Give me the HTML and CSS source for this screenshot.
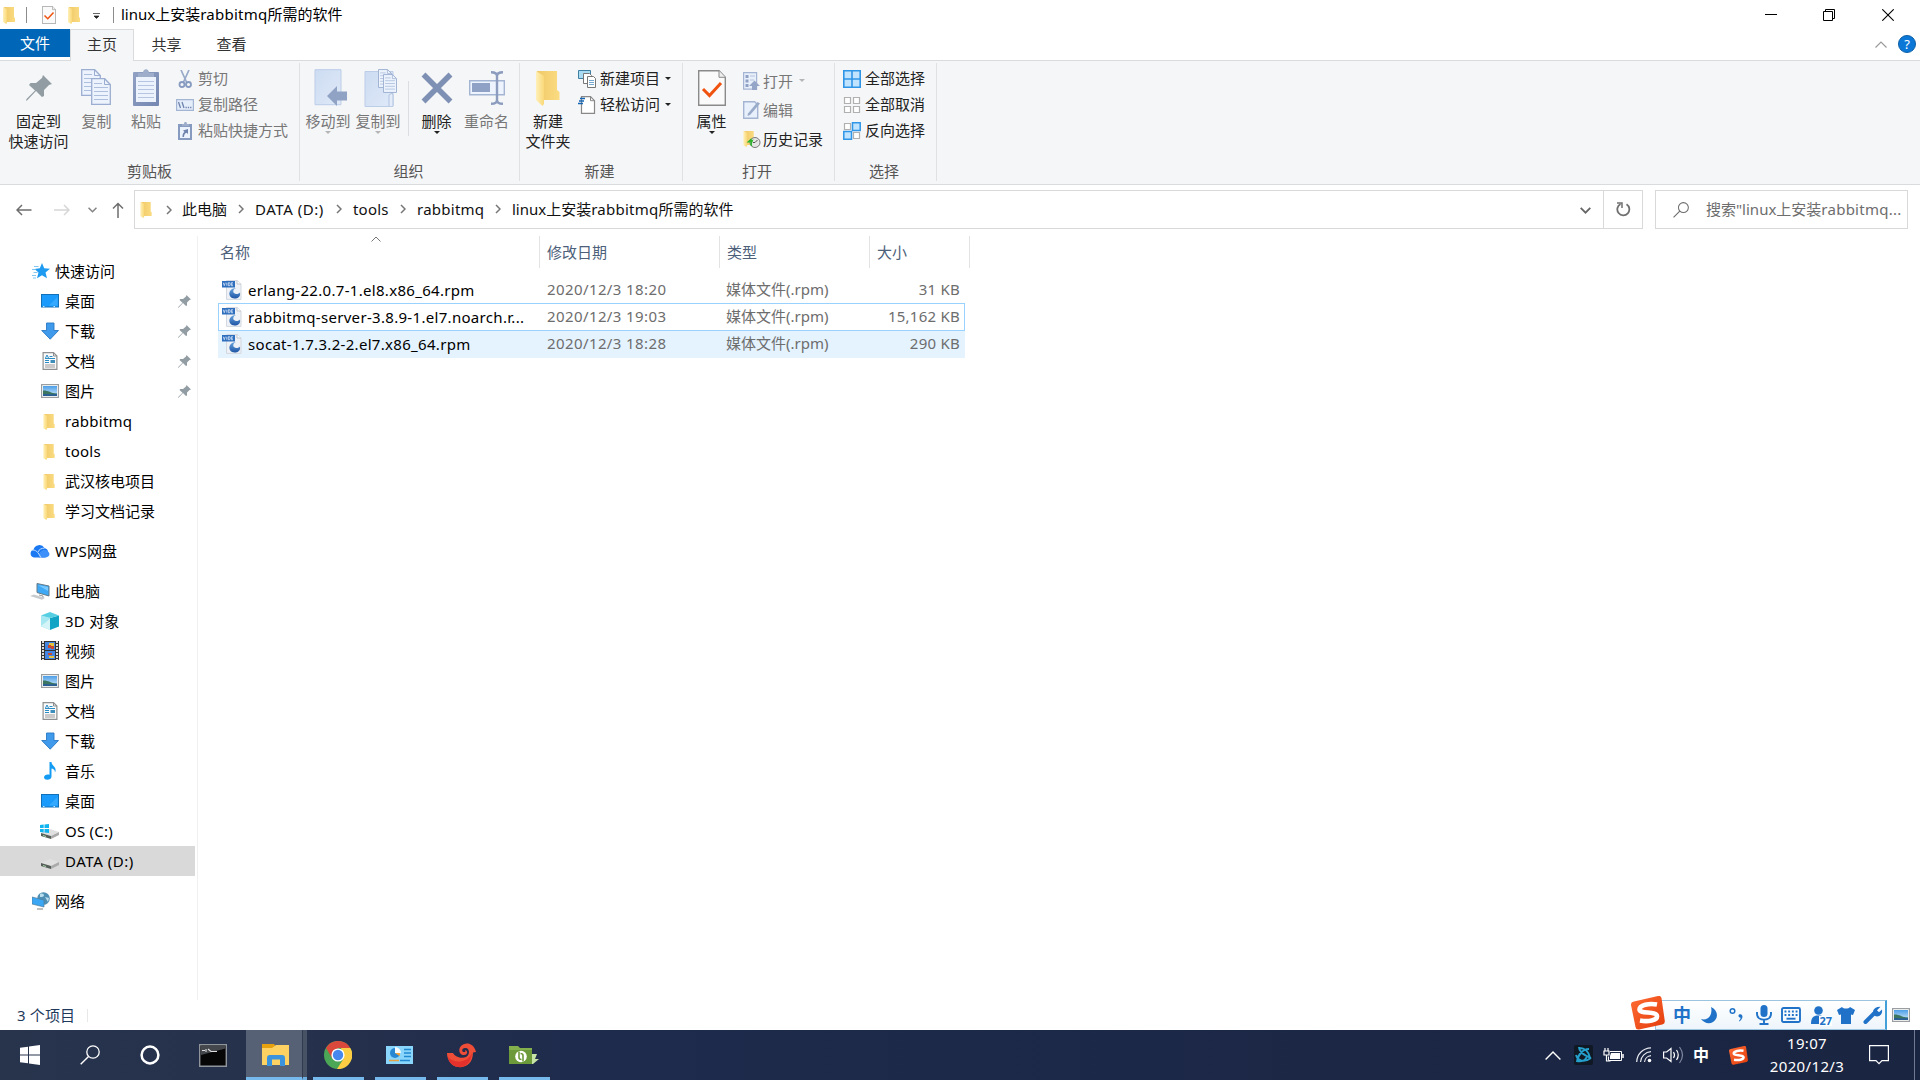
FILE: index.html
```html
<!DOCTYPE html>
<html lang="zh-CN">
<head>
<meta charset="utf-8">
<title>linux上安装rabbitmq所需的软件</title>
<link rel="stylesheet" href="styles.css">
</head>
<body>
<svg class="defs" width="0" height="0">
  <defs>
    <linearGradient id="gFold" x1="0" x2="1"><stop offset="0" stop-color="#f0c968"/><stop offset="1" stop-color="#fbdc82"/></linearGradient>
    <linearGradient id="gFront" x1="0" x2="1"><stop offset="0" stop-color="#fff0b8"/><stop offset="1" stop-color="#f9d878"/></linearGradient>
    <linearGradient id="gPaste" x1="0" x2="1" y2="1"><stop offset="0" stop-color="#91a1c4"/><stop offset="1" stop-color="#7487b1"/></linearGradient>
    <linearGradient id="gPale" x1="0" x2="1" y2="1"><stop offset="0" stop-color="#cddcf2"/><stop offset="1" stop-color="#dfe9f8"/></linearGradient>
    <linearGradient id="gSky" x1="0" x2="0" y2="1"><stop offset="0" stop-color="#4d9fe8"/><stop offset="1" stop-color="#cfe9fa"/></linearGradient>
    <linearGradient id="gRed" x1="0" x2="1" y2="1"><stop offset="0" stop-color="#ff6c34"/><stop offset="1" stop-color="#e33d0c"/></linearGradient>
    <linearGradient id="gOrb" x1="0" x2="0" y2="1"><stop offset="0" stop-color="#6aa5de"/><stop offset="1" stop-color="#1f56a6"/></linearGradient>
  </defs>
  <symbol id="folder" viewBox="0 0 12 18"><path d="M1 1h10v10l1 1v4H3z" fill="url(#gFold)"/><path d="M0 1l4 2v14l-1 1-3-2z" fill="url(#gFront)"/></symbol>
  <symbol id="checkdoc" viewBox="0 0 28 36"><path d="M.7.7H21l6.300 6.600V35.300H.7z" fill="#fafafa" stroke="#8a8a8a" stroke-width="1.400"/><path d="M21 .7v6.600h6.300" fill="#eee" stroke="#8a8a8a"/><path d="M5 19l6.500 6.500L23 13" fill="none" stroke="#f0520f" stroke-width="3"/></symbol>
  <symbol id="pin" viewBox="0 0 26 26"><path d="M17 0l9 9-3 1-5 5v6l-2 1-6-6-8.500 9L0 26l.5-2L9 15.500 3 10l1.500-2h5.500l6-5z" fill="#929da3"/></symbol>
  <symbol id="page" viewBox="0 0 20 27"><path d="M.7.7h13l5.600 5.800v19.800H.7z" fill="#ecf3fd" stroke="#9badd0" stroke-width="1.300"/><path d="M13.500 1v5.500h5.500" fill="none" stroke="#9badd0"/><path d="M3 9.500h14M3 13.500h14M3 17.500h14M3 21.500h14M3 5.500h8" stroke="#aebfdd" stroke-width="1.200"/></symbol>
  <symbol id="down" viewBox="0 0 18 18"><path d="M5.500 1h7.500v7.500h4.500L9.200 17.200.7 8.500h4.800z" fill="#3f9aec" stroke="#2878c5" stroke-width=".9"/></symbol>
  <symbol id="desktop" viewBox="0 0 18 14"><rect x=".5" y=".5" width="17" height="12.500" fill="#1a9bfc" stroke="#1270b8"/><path d="M8 11.500L16.500 3v8.500z" fill="#35a9ff"/><path d="M2 12.500h13" stroke="#bfe5ff" stroke-dasharray="1.500 9"/></symbol>
  <symbol id="doc" viewBox="0 0 15 18"><path d="M.6.600H11l3.400 3.400v13.400H.6z" fill="#fafafa" stroke="#8d8f90" stroke-width="1.200"/><path d="M11 .6V4h3.400" fill="none" stroke="#8d8f90"/><path d="M3 6l1.500-3L6 6M7 4.500h3M2.500 6.500h10M2.500 8.500h4M2.500 10.500h4" fill="none" stroke="#2a8cc4"/><path d="M8 8h4.500v3H8z" fill="#3d8dbb"/><path d="M2.500 13h10M2.500 15h10" stroke="#999"/></symbol>
  <symbol id="picture" viewBox="0 0 18 14"><rect x=".6" y=".6" width="16.800" height="12.800" fill="#fff" stroke="#9b9ea1" stroke-width="1.200"/><rect x="2" y="2" width="14" height="10" fill="url(#gSky)"/><path d="M2 6.500c5-.5 7 2.500 14 3V12H2z" fill="#3c7560"/><path d="M2 10c4-.5 8 1 14-.2V12H2z" fill="#2a5f96"/></symbol>
  <symbol id="star" viewBox="0 0 18 16"><path d="M10 0l2.200 5.300 5.800.4-4.500 3.700L15 15.300l-5-3.100-5 3.100 1.500-5.900L2.500 6l5.300-.700z" fill="#1e9bf0"/><path d="M2 3.500h4.500M0 6.500h4M1.500 9.500h4M0 12.500h4M1 15h3" stroke="#66b8ee" stroke-width=".8"/></symbol>
  <symbol id="cloud" viewBox="0 0 20 14"><path d="M4 13.500a4 4 0 0 1-.5-7.800A6 6 0 0 1 14.500 4a5 5 0 0 1 .5 9.500z" fill="#1a78f2"/><path d="M9 13.500c-1-6 5-9.500 9-6 3 2.500 1 6-3 6z" fill="#3d90fa"/><path d="M1 6.200c5-1 7 2 10 7.500M8 8c1-2.500 3.500-4 6.500-3.800" fill="none" stroke="#d6e9ff" stroke-width=".9"/></symbol>
  <symbol id="pc" viewBox="0 0 20 17"><path d="M7 .5L19 3v10L7 9.500z" fill="#3fa9f5" stroke="#657b88"/><path d="M8 2l10 6V4z" fill="#79c9ff"/><path d="M9 12l4 1v2" stroke="#999" fill="none"/><path d="M0 13l4-1.500L15 15l-3 1.800z" fill="#c8cbce"/></symbol>
  <symbol id="cube" viewBox="0 0 18 18"><path d="M0 3.500l9 2.500V18l-9-3.500z" fill="#a5e8f1"/><path d="M18 3.500L9 6V18l9-3.500z" fill="#12a4c4"/><path d="M9 0l9 3.500L9 6 0 3.500z" fill="#57cfe2"/><path d="M0 14l9-7v11z" fill="#d5f4f7"/></symbol>
  <symbol id="film" viewBox="0 0 18 20"><path d="M0 0h18v19H0z" fill="#333"/><path d="M4 1h10v8H4zM4 10h10v8H4z" fill="#4285e2"/><path d="M8 2h5v3H8zM8 15h5v2H8z" fill="#e6c33c"/><path d="M7 4h3v3H7zM10 5h3v3h-3zM7 12h4v2H7z" fill="#c8492f"/><path d="M2 0v19M16 0v19" stroke="#ddd" stroke-width="2" stroke-dasharray="2 1"/></symbol>
  <symbol id="note" viewBox="0 0 12 18"><path d="M5.500 0h2c0 4 6 5 3.500 10.500 0-3-2-4-3.500-4v8c0 4-7.500 4.500-7.500.8 0-2.500 3.500-3.500 5.500-2.500z" fill="#149bf3"/></symbol>
  <symbol id="drive" viewBox="0 0 18 10"><path d="M0 4l9-4 9 3-8 4z" fill="#e0e0e0"/><path d="M0 4l10 3v3L0 7z" fill="#555e59"/><path d="M10 7l8-4v3l-8 4z" fill="#aaa"/><path d="M2 6.500l3 1" stroke="#a7d9aa"/></symbol>
  <symbol id="net" viewBox="0 0 18 18"><circle cx="11.500" cy="6.500" r="6.300" fill="#4f8fb3"/><path d="M8 2c2-1 4 0 4 1.500S9 5 8 5zM13 5l4 1-1 4z" fill="#b9deee"/><path d="M0 5l12 3v7L0 12z" fill="#3aa6f4" stroke="#527c96" stroke-width=".7"/><path d="M5 17h6" stroke="#aaa" stroke-width="1.500"/></symbol>
  <symbol id="rpm" viewBox="0 0 20 20"><path d="M4.500.6h11L19 4v15.400H4.500z" fill="#eef1f6" stroke="#d3d8e0"/><path d="M15 .6V4h4" fill="#fff" stroke="#c2c7cf"/><path d="M14 8c-2.500.8-3.500 3.500-2 5s4.500 1.300 6-.5c.8 4-2 6-5.500 6-7-.5-7-10 1.500-10.500z" fill="url(#gOrb)"/><path d="M0 1h13v6.500H0z" fill="#2f6fbd"/><path d="M1.300 2.700l1 3 1-3M4.800 2.700v3M6.300 2.700v3h1.400l.5-1.500-.5-1.500zM11 2.700H9.300v3H11M9.300 4.200h1.500" fill="none" stroke="#dbe9fb" stroke-width=".8"/></symbol>
  <symbol id="sogou" viewBox="0 0 34 34"><path d="M3 5.500L27 0q3-.5 3.500 2l3.300 23q.3 3-2.500 3.500L8 33.500q-3 .500-3.500-2.500L0 9q-.3-3 3-3.500z" fill="url(#gRed)"/><path d="M26 8.500C18 7 8.500 9 8.500 13.500 8.500 18 25.500 15 26 20c.5 4.500-9 6-17 4.500" fill="none" stroke="#fff" stroke-width="4.600"/></symbol>
  <symbol id="chev" viewBox="0 0 6 10"><path d="M1 1l4 4-4 4" fill="none" stroke="#767676" stroke-width="1.500"/></symbol>
  <symbol id="caret" viewBox="0 0 6 3"><path d="M0 0h6L3 3z" fill="currentColor"/></symbol>
  <symbol id="mag" viewBox="0 0 20 20"><circle cx="13" cy="7" r="6.200" fill="none" stroke="currentColor" stroke-width="1.300"/><path d="M8.500 11.500L.7 19.300" stroke="currentColor" stroke-width="1.400"/></symbol>
</svg>

<div class="window">
  <header class="titlebar">
    <svg class="tb-folder" width="12" height="18"><use href="#folder"/></svg>
    <i class="tb-sep"></i>
    <svg class="tb-check" width="14" height="18"><use href="#checkdoc"/></svg>
    <svg class="tb-folder2" width="12" height="18"><use href="#folder"/></svg>
    <svg class="tb-more" width="8" height="6" viewBox="0 0 8 6"><path d="M0 .5h7M1 3h5L3.500 5.500z" fill="#222" stroke="#222" stroke-width=".7"/></svg>
    <i class="tb-sep"></i>
    <h1 class="title">linux上安装<span class="lat">rabbitmq</span>所需的软件</h1>
    <div class="winbtns">
      <svg width="12" height="12" viewBox="0 0 12 12"><path d="M0 5.500h12" stroke="#000"/></svg>
      <svg width="12" height="12" viewBox="0 0 12 12"><path d="M.5 2.500h9v9h-9zM2.500 2.500v-2h9v9h-2" fill="none" stroke="#000"/></svg>
      <svg width="12" height="12" viewBox="0 0 12 12"><path d="M.3.3l11.400 11.400M11.700.3L.3 11.700" stroke="#000" stroke-width="1.100"/></svg>
    </div>
  </header>

  <nav class="tabs">
    <span class="tab file">文件</span>
    <span class="tab active">主页</span>
    <span class="tab">共享</span>
    <span class="tab">查看</span>
    <div class="tabs-right">
      <svg width="12" height="7" viewBox="0 0 12 7"><path d="M.5 6.500L6 1l5.500 5.500" fill="none" stroke="#9a9a9a" stroke-width="1.200"/></svg>
      <span class="help">?</span>
    </div>
  </nav>

  <section class="ribbon">
    <div class="group g-clip">
      <div class="tools">
        <div class="big b-pin"><span class="ico"><svg width="26" height="26"><use href="#pin"/></svg></span><span>固定到<br>快速访问</span></div>
        <div class="big off b-copy"><span class="ico"><svg width="31" height="37" viewBox="0 0 31 37"><use href="#page" width="20" height="27"/><use href="#page" x="10" y="9" width="20" height="27"/></svg></span><span>复制</span></div>
        <div class="big off b-paste"><span class="ico"><svg width="26" height="37" viewBox="0 0 26 37"><rect y="3" width="26" height="34" rx="1" fill="url(#gPaste)"/><path d="M3 8h20v25H3z" fill="#ecf3fd"/><path d="M5 12.500h16M5 16.500h16M5 20.500h16M5 24.500h16M5 28.500h16" stroke="#b6c6e1" stroke-width="1.200"/><path d="M5 8V4h5c0-5 6-5 6 0h5v4z" fill="#9dadca"/></svg></span><span>粘贴</span></div>
        <div class="smalls">
          <div class="small off"><svg width="18" height="18" viewBox="0 0 18 18"><path d="M5 0l5.500 12M13 0L7.500 12" stroke="#98aac9" stroke-width="1.700"/><circle cx="6" cy="14.500" r="2.500" fill="none" stroke="#879ac0" stroke-width="1.800"/><circle cx="12.500" cy="14.500" r="2.500" fill="none" stroke="#879ac0" stroke-width="1.800"/></svg><span>剪切</span></div>
          <div class="small off"><svg width="18" height="12" viewBox="0 0 18 12"><path d="M.6.600h16.800v10.800H.6z" fill="#e4edfa" stroke="#a4b5d4" stroke-width="1.200"/><path d="M2.500 3l2 6M6 3l2 6" stroke="#6f83ad" stroke-width="1.300"/><path d="M9.500 8.500h6" stroke="#6f83ad" stroke-width="1.300" stroke-dasharray="1.300 1"/></svg><span>复制路径</span></div>
          <div class="small off"><svg width="18" height="18" viewBox="0 0 18 18"><path d="M2 2h14v16H2z" fill="#879ac0"/><path d="M4 5h10v11H4z" fill="#ecf3fd"/><path d="M6 4V2h2c0-3 3-3 3 0h2v2z" fill="#9dadca"/><path d="M6.500 15c0-3 .5-4 2-5L7 8.500 12 7v5l-1.500-1.200C9 11 8 13 8 15z" fill="#6f83ad"/></svg><span>粘贴快捷方式</span></div>
        </div>
      </div>
      <div class="gname">剪贴板</div>
    </div>
    <div class="group g-org">
      <div class="tools">
        <div class="big off b-50"><span class="ico shift"><svg width="34" height="37" viewBox="0 0 34 37"><path d="M1 .7h26v35H1z" fill="url(#gPale)" stroke="#bccde8"/><path d="M13 27l10-10v5.500h10v9H23V37z" fill="#91a3c5"/></svg></span><span>移动到</span><svg class="dd" width="6" height="3"><use href="#caret"/></svg></div>
        <div class="big off b-50"><span class="ico shift"><svg width="34" height="38" viewBox="0 0 34 38"><path d="M1 2.500h28v35H1z" fill="url(#gPale)" stroke="#bccde8"/><path d="M25 37V26l3-2 1 2v11" fill="#e3ecf8" stroke="#b1c3e1"/><use href="#page" x="14" y="0" width="14" height="19"/><use href="#page" x="19" y="5" width="14" height="19"/></svg></span><span>复制到</span><svg class="dd" width="6" height="3"><use href="#caret"/></svg></div>
        <i class="vline"></i>
        <div class="big b-55"><span class="ico"><svg width="32" height="32" viewBox="0 0 32 32"><path d="M2.500 2.500l27 27M29.500 2.500l-27 27" stroke="#7f90b5" stroke-width="5.500"/></svg></span><span>删除</span><svg class="dd" width="6" height="3"><use href="#caret"/></svg></div>
        <div class="big off b-45"><span class="ico"><svg width="36" height="34" viewBox="0 0 36 34"><path d="M.7 9.700h34.600v14H.7z" fill="#edf4fd" stroke="#a4b5d4" stroke-width="1.400"/><path d="M3 12h18v9H3z" fill="#8fa1c5"/><path d="M22 1.200c4 0 6 .8 6 3.800v24c0 3-2 3.800-6 3.800M34 1.200c-4 0-6 .8-6 3.800v24c0 3 2 3.800 6 3.800" fill="none" stroke="#8b9cbe" stroke-width="2.400"/></svg></span><span>重命名</span></div>
      </div>
      <div class="gname">组织</div>
    </div>
    <div class="group g-new">
      <div class="tools">
        <div class="big b-55"><span class="ico"><svg width="24" height="36" viewBox="0 0 24 36"><path d="M1 1h20v19l2.500 2v8H6z" fill="url(#gFold)"/><path d="M0 1l8 5v28l-1.500 2L0 30z" fill="url(#gFront)"/></svg></span><span>新建<br>文件夹</span></div>
        <div class="smalls">
          <div class="small"><svg width="18" height="18" viewBox="0 0 18 18"><path d="M.5.5h12v8H.5z" fill="#a9dcf2" stroke="#3e7fa3"/><path d="M5.500 3.500h6l2 2v8h-8z" fill="#fff" stroke="#777"/><path d="M9.500 6.500h6l2 2v9h-8z" fill="#fff" stroke="#777"/><path d="M11 10.500h5M11 12.500h5M11 14.500h5" stroke="#76a7d1"/></svg><span>新建项目</span><svg class="ddr" width="6" height="3"><use href="#caret"/></svg></div>
          <div class="small"><svg width="18" height="18" viewBox="0 0 18 18"><path d="M3.500.7h9l4 4v12.600h-13z" fill="#fff" stroke="#888" stroke-width="1.200"/><path d="M12.500.7v4h4" fill="none" stroke="#888"/><path d="M2 2.500h5M1 5h5M0 7.500h5" stroke="#1665b5" stroke-width="1.400"/></svg><span>轻松访问</span><svg class="ddr" width="6" height="3"><use href="#caret"/></svg></div>
        </div>
      </div>
      <div class="gname">新建</div>
    </div>
    <div class="group g-open">
      <div class="tools">
        <div class="big b-55"><span class="ico"><svg width="28" height="36"><use href="#checkdoc"/></svg></span><span>属性</span><svg class="dd" width="6" height="3"><use href="#caret"/></svg></div>
        <div class="smalls wide">
          <div class="small off"><svg width="18" height="18" viewBox="0 0 18 18"><path d="M.6.600h13v16.500H.6z" fill="#e7effa" stroke="#a4b5d4" stroke-width="1.200"/><path d="M2.500 3h3v3h-3zM2.500 7.500h3v3h-3zM2.500 12h3v3h-3z" fill="#8fa1c5"/><path d="M7 4h5M7 8h4" stroke="#b5c4dd"/><path d="M11.500 8.500L17 14h-3v4H9v-4H6z" fill="#94a5c7"/></svg><span>打开</span><svg class="ddr" width="6" height="3"><use href="#caret"/></svg></div>
          <div class="small off"><svg width="18" height="18" viewBox="0 0 18 18"><path d="M.7.7h11l3 3v13.600H.7z" fill="#e8f0fb" stroke="#a4b5d4" stroke-width="1.400"/><path d="M14.500 1l2.500 1.500-10 11.500-2.500 1 .5-2.500z" fill="#98abc9"/></svg><span>编辑</span></div>
          <div class="small"><svg width="18" height="18" viewBox="0 0 18 18"><use href="#folder" width="12" height="17"/><circle cx="12" cy="12.500" r="5" fill="#e5e5e5" stroke="#777"/><path d="M12 12.500l2.500-2.500M12 12.500h-2" fill="none" stroke="#555"/><path d="M3.500 12.500l5-4.500v2c1 0 1.500-.3 2-1-.5 3-2.500 4-1 7.500-3-1-2.500-3.500-1.500-4z" fill="#2db32c"/></svg><span>历史记录</span></div>
        </div>
      </div>
      <div class="gname">打开</div>
    </div>
    <div class="group g-sel">
      <div class="tools">
        <div class="smalls">
          <div class="small"><svg width="18" height="18" viewBox="0 0 18 18"><path d="M.8.800h16.400v16.400H.8zM9 1v16M1 9h16" fill="#c0e4ff" stroke="#2f95e6" stroke-width="1.600"/></svg><span>全部选择</span></div>
          <div class="small"><svg width="18" height="18" viewBox="0 0 18 18"><path d="M1.500 1.500h6v6h-6zM10.500 1.500h6v6h-6zM1.500 10.500h6v6h-6zM10.500 10.500h6v6h-6z" fill="#fff" stroke="#b0b0b0" stroke-width="1.200"/></svg><span>全部取消</span></div>
          <div class="small"><svg width="18" height="18" viewBox="0 0 18 18"><path d="M1.500 1.500h6v6h-6zM10.500 10.500h6v6h-6z" fill="#fff" stroke="#b0b0b0" stroke-width="1.200"/><path d="M9.500.8h7.700v7.700H9.500zM.8 9.500h7.700v7.700H.8z" fill="#c0e4ff" stroke="#2f95e6" stroke-width="1.500"/></svg><span>反向选择</span></div>
        </div>
      </div>
      <div class="gname">选择</div>
    </div>
  </section>

  <section class="addressbar">
    <div class="navbtns">
      <svg width="16" height="12" viewBox="0 0 16 12"><path d="M15.500 6H1M6 1L1 6l5 5" fill="none" stroke="#6e6e6e" stroke-width="1.500"/></svg>
      <svg width="16" height="12" viewBox="0 0 16 12"><path d="M0 6h15M10 1l5 5-5 5" fill="none" stroke="#d6d6d6" stroke-width="1.500"/></svg>
      <svg width="9" height="6" viewBox="0 0 9 6"><path d="M.5.700l4 4 4-4" fill="none" stroke="#858585" stroke-width="1.600"/></svg>
      <svg width="12" height="16" viewBox="0 0 12 16"><path d="M6 16V1.500M1 6.500l5-5 5 5" fill="none" stroke="#6e6e6e" stroke-width="1.500"/></svg>
    </div>
    <div class="path">
      <svg width="12" height="17"><use href="#folder"/></svg>
      <svg class="ch first" width="6" height="10"><use href="#chev"/></svg><span class="c1">此电脑</span>
      <svg class="ch" width="6" height="10"><use href="#chev"/></svg><span class="c2">DATA (D:)</span>
      <svg class="ch" width="6" height="10"><use href="#chev"/></svg><span class="c3">tools</span>
      <svg class="ch" width="6" height="10"><use href="#chev"/></svg><span class="c4 lat">rabbitmq</span>
      <svg class="ch" width="6" height="10"><use href="#chev"/></svg><span>linux上安装<span class="lat">rabbitmq</span>所需的软件</span>
      <svg class="pdrop" width="11" height="7" viewBox="0 0 11 7"><path d="M.7.900L5.500 5.700 10.300.9" fill="none" stroke="#666" stroke-width="1.800"/></svg>
    </div>
    <div class="refresh"><svg width="15" height="15" viewBox="0 0 15 15"><path d="M10.500 2.200A6 6 0 1 1 4.500 2" fill="none" stroke="#707070" stroke-width="1.800"/><path d="M1 1h5v5" fill="none" stroke="#707070" stroke-width="1.500"/></svg></div>
    <div class="search"><svg width="16" height="16"><use href="#mag"/></svg><span>搜索"linux上安装<span class="lat">rabbitmq...</span></span></div>
  </section>

  <main class="content">
    <aside class="sidebar">
      <div class="item root"><svg width="18" height="16"><use href="#star"/></svg>快速访问</div>
      <div class="item"><svg width="18" height="14"><use href="#desktop"/></svg>桌面<svg class="pn" width="13" height="13"><use href="#pin"/></svg></div>
      <div class="item"><svg width="18" height="18"><use href="#down"/></svg>下载<svg class="pn" width="13" height="13"><use href="#pin"/></svg></div>
      <div class="item"><svg width="18" height="18"><use href="#doc"/></svg>文档<svg class="pn" width="13" height="13"><use href="#pin"/></svg></div>
      <div class="item"><svg width="18" height="14"><use href="#picture"/></svg>图片<svg class="pn" width="13" height="13"><use href="#pin"/></svg></div>
      <div class="item fold lat"><svg width="12" height="17"><use href="#folder"/></svg>rabbitmq</div>
      <div class="item fold lat"><svg width="12" height="17"><use href="#folder"/></svg>tools</div>
      <div class="item fold"><svg width="12" height="17"><use href="#folder"/></svg>武汉核电项目</div>
      <div class="item fold"><svg width="12" height="17"><use href="#folder"/></svg>学习文档记录</div>
      <div class="item root gap"><svg width="20" height="14"><use href="#cloud"/></svg><span><span class="lat">WPS</span>网盘</span></div>
      <div class="item root gap"><svg width="20" height="17"><use href="#pc"/></svg>此电脑</div>
      <div class="item"><svg width="18" height="18"><use href="#cube"/></svg><span><span class="lat">3D </span>对象</span></div>
      <div class="item"><svg width="18" height="20"><use href="#film"/></svg>视频</div>
      <div class="item"><svg width="18" height="14"><use href="#picture"/></svg>图片</div>
      <div class="item"><svg width="18" height="18"><use href="#doc"/></svg>文档</div>
      <div class="item"><svg width="18" height="18"><use href="#down"/></svg>下载</div>
      <div class="item"><svg width="18" height="18"><use href="#note"/></svg>音乐</div>
      <div class="item"><svg width="18" height="14"><use href="#desktop"/></svg>桌面</div>
      <div class="item lat"><svg width="19" height="15" viewBox="0 0 19 15"><use href="#drive" x="1" y="5" width="18" height="10"/><path d="M0 1l3.700-.5v3.500H0zM4.500.4L9 0v4H4.500zM0 5h3.700v3.500L0 8zM4.500 5H9v4l-4.500-.5z" fill="#10b4ee"/></svg>OS (C:)</div>
      <div class="item sel"><svg class="drv" width="18" height="10"><use href="#drive"/></svg><span class="c2">DATA (D:)</span></div>
      <div class="item root gap"><svg width="18" height="18"><use href="#net"/></svg>网络</div>
    </aside>
    <section class="files">
      <div class="row head"><span class="name">名称</span><span>修改日期</span><span>类型</span><span>大小</span>
        <svg class="sort" width="10" height="6" viewBox="0 0 10 6"><path d="M.5 5.500L5 1l4.500 4.500" fill="none" stroke="#777"/></svg></div>
      <div class="row"><span class="name"><svg width="20" height="20"><use href="#rpm"/></svg><b>erlang-22.0.7-1.el8.x86_64.rpm</b></span><span class="date">2020/12/3 18:20</span><span class="type">媒体文件(.rpm)</span><span class="size">31 KB</span></div>
      <div class="row focus"><span class="name"><svg width="20" height="20"><use href="#rpm"/></svg><b>rabbitmq-server-3.8.9-1.el7.noarch.r...</b></span><span class="date">2020/12/3 19:03</span><span class="type">媒体文件(.rpm)</span><span class="size">15,162 KB</span></div>
      <div class="row hover"><span class="name"><svg width="20" height="20"><use href="#rpm"/></svg><b>socat-1.7.3.2-2.el7.x86_64.rpm</b></span><span class="date">2020/12/3 18:28</span><span class="type">媒体文件(.rpm)</span><span class="size">290 KB</span></div>
    </section>
  </main>

  <footer class="status"><span class="count">3 个项目</span><svg width="18" height="14"><use href="#picture"/></svg></footer>

  <div class="ime">
    <svg class="logo" width="34" height="34"><use href="#sogou"/></svg>
    <div class="imebar">
      <span class="zh">中</span>
      <svg width="18" height="18" viewBox="0 0 18 18"><path d="M11 1c7 3 8 11 2 15-4 2.500-9 1-12-3 7 2 12-4 10-12z" fill="#1f72c8"/></svg>
      <svg width="16" height="16" viewBox="0 0 16 16"><circle cx="3.500" cy="4" r="2.300" fill="none" stroke="#1f72c8" stroke-width="1.500"/><path d="M10 7.500c4-1.500 5 3.500.5 7l-.5-.8c1.500-1.500 1.800-2.500 1.300-3.200-1.500 0-2.500-1.500-1.300-3z" fill="#1f72c8"/></svg>
      <svg width="16" height="20" viewBox="0 0 16 20"><rect x="4.500" y="0" width="7" height="12" rx="3.500" fill="#1f72c8"/><path d="M1 7v2c0 7.500 14 7.500 14 0V7M8 15v4M3.500 19h9" fill="none" stroke="#1f72c8" stroke-width="1.900"/></svg>
      <svg width="20" height="16" viewBox="0 0 20 16"><rect x="1" y="1" width="18" height="14" rx="1.500" fill="none" stroke="#1f72c8" stroke-width="1.900"/><path d="M3.500 4.500h13M3.500 8h13" stroke="#1f72c8" stroke-width="1.900" stroke-dasharray="1.900 1.800"/><path d="M5.500 11.700h9" stroke="#1f72c8" stroke-width="1.900"/></svg>
      <span class="user"><svg width="20" height="18" viewBox="0 0 20 18"><circle cx="7.500" cy="4.500" r="4.300" fill="#1f72c8"/><path d="M0 18c0-7 3-8.500 7.500-8.500S15 11 15 18z" fill="#1f72c8"/></svg><em>27</em></span>
      <svg width="18" height="18" viewBox="0 0 18 18"><path d="M5 1c1.500 2 6.500 2 8 0l5 3-2 5-2-.5V18H4V8.500L2 9 0 4z" fill="#1f72c8"/></svg>
      <svg width="20" height="18" viewBox="0 0 20 18"><path d="M2.500 16L11 7.500" stroke="#1f72c8" stroke-width="4" stroke-linecap="round"/><path d="M17.500.800L14 4.300l2 2 3-2.800c1 5-3 8-7 6.500-4-3-2-9.500 5.500-9.200z" fill="#1f72c8"/></svg>
    </div>
  </div>

  <footer class="taskbar">
    <div class="start">
      <svg width="20" height="20" viewBox="0 0 20 20"><path d="M0 2.800L8 1.700V9.500H0zM9 1.500L20 0v9.500H9zM0 10.500h8v7.800L0 17.200zM9 10.500h11V20L9 18.500z" fill="#fff"/></svg>
      <svg width="20" height="20"><use href="#mag"/></svg>
      <svg width="20" height="20" viewBox="0 0 20 20"><circle cx="10" cy="10" r="8.400" fill="none" stroke="#fff" stroke-width="2.500"/></svg>
      <svg class="cmd" width="28" height="23" viewBox="0 0 28 23"><path d="M.7.7h26.600v21.600H.7z" fill="#060606" stroke="#90959b" stroke-width="1.400"/><path d="M1.500 1.500h25v3L2 11z" fill="#44474b"/><path d="M3 6.500h3M7 5v3M9 5l3 2.500M12 7.500h6" stroke="#ddd" stroke-width="1.100"/></svg>
    </div>
    <div class="app current"><svg width="28" height="24" viewBox="0 0 28 24"><path d="M0 1h12l2 3v5H0z" fill="#e7a00e"/><path d="M0 5h10l4-3h13v20H0z" fill="#fed262"/><path d="M5 23V15q0-3 3-3h12q3 0 3 3v8h-5v-6.500H10V23z" fill="#3a93dc"/></svg></div>
    <div class="stack"></div>
    <div class="app"><svg width="28" height="28" viewBox="0 0 28 28"><circle cx="14" cy="14" r="14" fill="#4ba656"/><path d="M2 7A14 14 0 0 1 26.300 7H14L8 17z" fill="#da493b"/><path d="M26.300 7A14 14 0 0 1 13 28l7-11-3-10z" fill="#fdcd43"/><circle cx="14" cy="14" r="6.600" fill="#fff"/><circle cx="14" cy="14" r="5.200" fill="#4688ee"/></svg></div>
    <div class="app"><svg width="27" height="18" viewBox="0 0 27 18"><path d="M0 0h27v18H0z" fill="#8ad5fb"/><circle cx="9" cy="7" r="5" fill="#2787d3"/><path d="M9 7V1a6 6 0 0 1 6 6z" fill="#f5fbff"/><path d="M9 7l4.500 3A5 5 0 0 0 14 7z" fill="#f6a43a"/><path d="M18 3.500h7M18 7h7M18 10.500h7" stroke="#2189cf" stroke-width="1.500"/><path d="M3 14.500h10" stroke="#e7a343" stroke-width="1.500"/><path d="M14 14.500h10" stroke="#2189cf" stroke-width="1.500"/></svg></div>
    <div class="app"><svg width="29" height="25" viewBox="0 0 29 25"><path d="M0 10h6c2 4 9 6 13 4 5-3 3-10-1-9-3 0-4 4-1 4 1.500 0 2-1 1-2 3 0 3 5-1 5-5 0-6-6-3-9 4-4.500 13-3.500 15 6l-3 .5C26 21 18 25 11 24 4 23 0 17 0 10z" fill="#ee4d38"/><path d="M1 14c6 7 20 6 24-4-1 11-8 15-14 14-6-.7-9-5-10-10z" fill="#e4312c"/></svg></div>
    <div class="app"><svg width="30" height="20" viewBox="0 0 30 20"><path d="M0 1h9l2 2h12v3H0z" fill="#83af4c"/><path d="M0 5h23v14H0z" fill="#6c993a"/><path d="M23 9h5l-2 5h4l-6 5h-1z" fill="#c6e4a5"/><circle cx="12" cy="11.500" r="5.800" fill="#fff"/><path d="M10 6.500v6q0 2 2.500 2M14 16.500v-6q0-2-2.500-2" fill="none" stroke="#6c993a" stroke-width="1.600"/></svg></div>
    <div class="tray">
      <svg width="16" height="9" viewBox="0 0 16 9"><path d="M.6 8.400L8 1l7.400 7.400" fill="none" stroke="#fff" stroke-width="1.400"/></svg>
      <svg class="t-blue" width="19" height="20" viewBox="0 0 19 20"><rect width="19" height="20" rx="2" fill="#101923"/><path d="M5 2c0 5 4 8 12 11M15 4C9 4 4 9 3 17M2 10c2 6 8 8 15 3M5 3c6 0 10 4 11 10M3 16c5 1 9-1 10-5" fill="none" stroke="#259fcc" stroke-width="2"/></svg>
      <svg class="t-bat" width="21" height="15" viewBox="0 0 21 15"><path d="M1 3h5v4H1zM2 0v3M5 0v3M3.500 7v6h4" fill="none" stroke="#fff" stroke-width="1.200"/><path d="M7 3.500h11.500v9H5.500v-4" fill="none" stroke="#fff"/><path d="M8 5h9v6H7V8z" fill="#fff"/><path d="M20 6v4" stroke="#fff" stroke-width="1.500"/></svg>
      <svg class="t-wifi" width="16" height="16" viewBox="0 0 16 16"><path d="M.7 15A14.500 14.500 0 0 1 15 .8M4.500 15A11 11 0 0 1 15 4.700M8.500 15A7 7 0 0 1 15 8.700" fill="none" stroke="#e5e8ee" stroke-width="1.200"/><circle cx="13.500" cy="13.500" r="1.800" fill="#fff"/></svg>
      <svg class="t-vol" width="21" height="18" viewBox="0 0 21 18"><path d="M.6 6h3L8 2.500v13L3.600 12h-3z" fill="none" stroke="#fff" stroke-width="1.200"/><path d="M10.500 6q2 3 0 6M13.500 4q3.500 5 0 10" fill="none" stroke="#fff" stroke-width="1.200"/><path d="M16.500 1q6 8 0 16" fill="none" stroke="#8189a0" stroke-width="1.200"/></svg>
      <span class="t-zh">中</span>
      <svg class="t-sg" width="19" height="19"><use href="#sogou"/></svg>
      <div class="clock">19:07<br>2020/12/3</div>
      <svg class="t-note" width="20" height="20" viewBox="0 0 20 20"><path d="M.6.600h18.800v15H13l-3 3-3-3H.6z" fill="none" stroke="#fff" stroke-width="1.200"/></svg>
      <i class="peek"></i>
    </div>
  </footer>
</div>
</body>
</html>
```

FILE: styles.css
```css
* { box-sizing: border-box; }
body {
  margin: 0;
  font-family: "Noto Sans", "Noto Sans CJK SC", sans-serif;
  font-size: 15px;
  line-height: 20px;
  color: #111;
  background: #fff;
}
svg { display: block; flex: none; }
i, em { font-style: normal; }
.defs { position: absolute; }
.window { width: 1920px; height: 1080px; display: flex; flex-direction: column; overflow: hidden; position: relative; white-space: nowrap; }
.lat { letter-spacing: .25px; }

.titlebar { height: 29px; display: flex; align-items: center; padding-left: 3px; }
.tb-sep { width: 1px; height: 16px; background: #8c8c8c; margin-left: 11px; }
.tb-check { margin-left: 15px; }
.tb-folder2 { margin-left: 12px; }
.tb-more { margin: 2px 0 0 13px; }
.tb-more + .tb-sep { margin-left: 12px; }
.title { font: inherit; margin: 0 0 2px 7px; color: #000; }
.winbtns { margin-left: auto; display: flex; gap: 47px; padding-right: 26px; }
.winbtns svg:first-child { margin-right: -1px; }

.tabs { height: 32px; display: flex; align-items: flex-start; margin-bottom: -1px; position: relative; color: #333; }
.tab { width: 65px; height: 31px; line-height: 31px; text-align: center; }
.tab.file { width: 70px; height: 28px; line-height: 29px; background: #0067b8; color: #fff; }
.tab.active { width: 64px; height: 32px; line-height: 29px; background: #f5f6f7; border: 1px solid #dadbdc; border-bottom: 0; }
.tabs-right { margin-left: auto; display: flex; align-items: center; gap: 11px; padding: 6px 4px 0 0; }
.help { width: 18px; height: 18px; border-radius: 50%; background: #0b78d8; border: 1px solid #0c5ea6; color: #fff; font-size: 13px; line-height: 16px; text-align: center; }

.ribbon { height: 125px; display: flex; background: #f5f6f7; border-top: 1px solid #dadbdc; border-bottom: 1px solid #dadbdc; color: #222; }
.group { margin: 2px 0 3px; border-right: 1px solid #e0e1e3; display: flex; flex-direction: column; justify-content: space-between; }
.g-clip { width: 300px; }
.g-org { width: 220px; padding-left: 3px; }
.g-new { width: 163px; }
.g-open { width: 152px; }
.g-sel { width: 102px; }
.tools { display: flex; padding-top: 3px; }
.gname { text-align: center; color: #555; height: 20px; line-height: 20px; }
.g-org .gname { padding-right: 5px; }
.g-new .gname, .g-open .gname, .g-sel .gname { padding-right: 3px; }
.big { display: flex; flex-direction: column; align-items: center; text-align: center; line-height: 20px; }
.ico { height: 45px; padding: 2px 0 4px; display: flex; align-items: center; }
.ico.shift { padding-left: 6px; }
.b-pin { width: 77px; }
.b-copy { width: 39px; }
.b-paste { width: 60px; }
.b-50 { width: 50px; }
.b-55 { width: 56px; }
.b-45 { width: 45px; }
.off { color: #777; }
.off .dd, .off .ddr { color: #b5b5b5; }
.vline { width: 1px; height: 55px; background: #dcdde0; margin: 15px 0 0 5px; }
.vline + .b-55 { width: 55px; }
.smalls { display: flex; flex-direction: column; }
.small { height: 26px; display: flex; align-items: center; gap: 4px; }
.small > span { margin-bottom: 2px; }
.small > svg:first-child { margin-bottom: 1px; }
.smalls.wide { padding-top: 1px; }
.smalls.wide .small { height: 29px; gap: 2px; }
.g-open .smalls { padding-left: 3px; }
.g-open .big { width: 57px; }
.g-new .smalls { padding-left: 2px; }
.g-sel .smalls { padding-left: 8px; }
.ddr { margin: 0 0 2px 1px; }
.wide .ddr { margin-left: 4px; }

.addressbar { height: 51px; display: flex; padding-top: 5px; }
.navbtns { width: 134px; height: 39px; display: flex; align-items: center; padding-left: 16px; }
.navbtns svg:nth-child(2) { margin-left: 22px; }
.navbtns svg:nth-child(3) { margin-left: 18px; }
.navbtns svg:nth-child(4) { margin-left: 15px; }
.path { width: 1470px; height: 39px; border: 1px solid #d9d9d9; display: flex; align-items: center; padding-left: 5px; }
.path > span { margin-bottom: 2px; }
.path > svg { margin-bottom: 1px; }
.ch { margin: 0 11px 0 10px; }
.ch.first { margin: 0 10px 0 14px; }
.c1 { width: 46px; }
.c2 { width: 71px; letter-spacing: .55px; }
.c3 { width: 37px; letter-spacing: .2px; }
.c4 { width: 68px; }
.pdrop { margin: 2px 12px 0 auto; }
.refresh { width: 39px; height: 39px; border: 1px solid #d9d9d9; border-left: 0; display: flex; align-items: center; justify-content: center; }
.search { width: 253px; height: 39px; margin-left: 12px; border: 1px solid #d9d9d9; display: flex; align-items: center; padding-left: 17px; gap: 17px; color: #6d6d6d; }
.search span { margin-bottom: 1px; }

.content { flex: 1; display: flex; min-height: 0; }
.sidebar { width: 198px; border-right: 1px solid #f0f0f0; padding-top: 20px; color: #000; }
.item { height: 30px; display: flex; align-items: center; padding-left: 41px; gap: 6px; width: 195px; }
.item.fold { padding-left: 43px; gap: 10px; }
.item.root { padding-left: 32px; gap: 5px; }
.item.root svg[width="20"] { margin-left: -2px; }
.item svg[width="19"] { margin: 0 0 0 -1px; }
.item.gap { margin-top: 10px; }
.item.sel { background: #d9d9d9; }
.drv { margin-top: 5px; }
.pn { margin: 0 4px 0 auto; }
.files { padding-left: 20px; }
.row { display: grid; grid-template-columns: 321px 180px 150px 96px; width: 747px; height: 27px; line-height: 26px; color: #6d6d6d; }
.row > span { padding-left: 8px; }
.row .name { padding-left: 4px; color: #000; display: flex; align-items: center; gap: 6px; }
.row b { font-weight: 400; letter-spacing: .31px; }
.row .date { letter-spacing: .4px; }
.row .type { padding-left: 7px; }
.row .size { text-align: right; padding: 0 5px 0 0; letter-spacing: .25px; }
.row.head { height: 32px; line-height: 32px; grid-template-columns: 322px 180px 150px 100px; width: 752px; color: #4c607a; margin-bottom: 8px; position: relative; }
.row.head > span { border-right: 1px solid #e3e3e3; padding-left: 7px; }
.row.head > .name { padding-left: 2px; color: #4c607a; }
.sort { position: absolute; left: 153px; top: 0; }
.row.focus { height: 28px; box-shadow: inset 0 0 0 1px #99d1ff; }
.row.hover { background: #e5f3ff; line-height: 24px; }
.row.hover .name { padding-bottom: 2px; }

.status { height: 30px; display: flex; align-items: center; justify-content: space-between; padding: 0 10px 0 17px; color: #1e395b; }
.count { width: 71px; height: 13px; line-height: 13px; border-right: 1px solid #e8e8e8; letter-spacing: .15px; }

.ime { position: absolute; left: 1631px; top: 996px; display: flex; }
.logo { position: relative; z-index: 1; }
.imebar { height: 30px; width: 232px; margin: 4px 0 0 -10px; border: 1px solid #9cc5e2; border-right: 2px solid #44a0d8; background: linear-gradient(#fff, #edf5fb); display: flex; align-items: center; padding: 0 4px 0 17px; gap: 9px; }
.zh { font-size: 18px; font-weight: 700; color: #1f72c8; line-height: 28px; }
.imebar svg:nth-child(3) { margin-left: 2px; }
.imebar svg:nth-child(4) { margin-left: 2px; }
.user { position: relative; margin-left: 1px; }
.user em { position: absolute; right: -1px; bottom: -2px; font-size: 11px; line-height: 10px; font-weight: 700; color: #1f72c8; background: #fff; }
.imebar svg:nth-child(7) { margin-left: -3px; }
.imebar svg:nth-child(8) { margin-left: -1px; }

.taskbar { height: 50px; display: flex; background: linear-gradient(90deg, #27344c 0, #26314c 15%, #1f2b4c 30%, #1b2745 70%, #1a2542 100%); color: #fff; }
.start { width: 246px; display: flex; align-items: center; padding-left: 20px; gap: 40px; }
.cmd { margin-left: -1px; }
.app { width: 51px; margin-right: 11px; display: flex; align-items: center; justify-content: center; border-bottom: 3px solid #76b9ed; padding: 3px 2px 0 0; }
.app.current { width: 56px; margin: 0; padding: 3px 0 0 4px; background: #566176; }
.stack { width: 5px; margin-right: 6px; border-left: 1px solid #313b50; border-bottom: 3px solid #6caee0; background: #485265; }
.tray { margin-left: auto; display: flex; align-items: center; width: 375px; }
.t-blue { margin-left: 13px; }
.t-bat { margin-left: 10px; }
.t-wifi { margin-left: 12px; }
.t-vol { margin-left: 11px; }
.t-zh { width: 18px; margin-left: 9px; font-size: 16px; line-height: 22px; font-weight: 700; }
.t-sg { margin-left: 18px; }
.clock { width: 90px; margin-left: 14px; text-align: center; line-height: 23px; letter-spacing: .35px; }
.t-note { margin-left: 17px; }
.peek { width: 1px; height: 50px; margin-left: 25px; background: #717991; }
```
